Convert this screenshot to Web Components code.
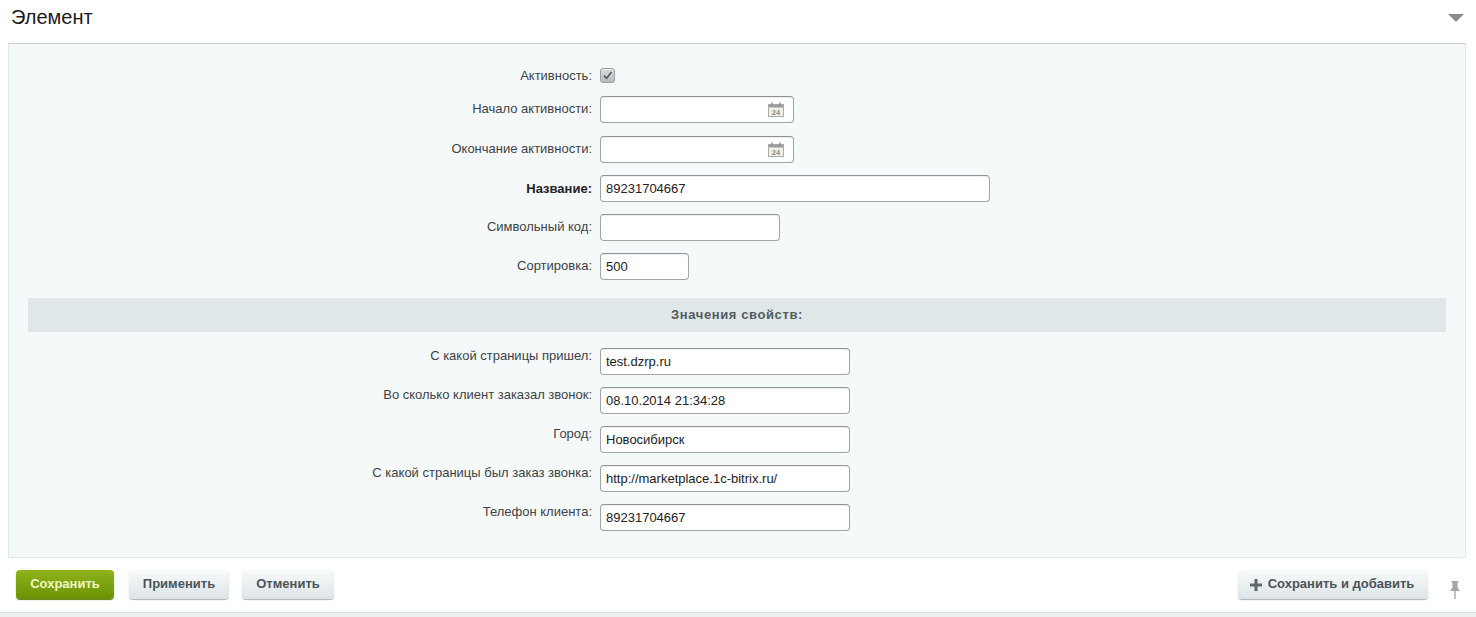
<!DOCTYPE html>
<html lang="ru"><head><meta charset="utf-8"><title>Элемент</title>
<style>
html,body{margin:0;padding:0;background:#fff;height:617px;overflow:hidden;font-family:"Liberation Sans",Arial,sans-serif;font-size:13px;color:#000}
</style></head><body>
<x-page>
  <x-head slot="head">Элемент</x-head>
  <x-panel slot="panel">
    <x-row label="Активность:" kind="check"><x-check></x-check></x-row>
    <x-row label="Начало активности:" style="margin-bottom:13px"><x-field w="194" cal></x-field></x-row>
    <x-row label="Окончание активности:"><x-field w="194" cal></x-field></x-row>
    <x-row label="Название:" strong><x-field w="390">89231704667</x-field></x-row>
    <x-row label="Символьный код:"><x-field w="180"></x-field></x-row>
    <x-row label="Сортировка:"><x-field w="89">500</x-field></x-row>
    <x-section>Значения свойств:</x-section>
    <x-row label="С какой страницы пришел:" top><x-field w="250">test.dzrp.ru</x-field></x-row>
    <x-row label="Во сколько клиент заказал звонок:" top><x-field w="250">08.10.2014 21:34:28</x-field></x-row>
    <x-row label="Город:" top><x-field w="250">Новосибирск</x-field></x-row>
    <x-row label="С какой страницы был заказ звонка:" top><x-field w="250">http://marketplace.1c-bitrix.ru/</x-field></x-row>
    <x-row label="Телефон клиента:" top><x-field w="250">89231704667</x-field></x-row>
  </x-panel>
  <x-footer slot="foot">
    <x-btn kind="green" w="98">Сохранить</x-btn>
    <x-btn w="100" style="margin-left:15px">Применить</x-btn>
    <x-btn w="92" style="margin-left:13px">Отменить</x-btn>
    <x-btn w="190" plus style="margin-left:auto">Сохранить и добавить</x-btn>
    <x-pin></x-pin>
  </x-footer>
</x-page>
<script>
function def(name, html, init){
  customElements.define(name, class extends HTMLElement{
    constructor(){super();const r=this.attachShadow({mode:'open'});r.innerHTML=html;}
    connectedCallback(){ if(init) init(this,this.shadowRoot); }
  });
}
def('x-page',`<style>:host{display:flex;flex-direction:column;height:617px;box-sizing:border-box}
.strip{margin-top:auto;height:4px;background:#eaf0f0;border-top:1px solid #d7e0e0}</style>
<slot name="head"></slot><slot name="panel"></slot><slot name="foot"></slot><slot></slot><div class="strip"></div>`);
def('x-head',`<style>:host{display:flex;align-items:flex-start;height:43px;padding:0 12px 0 11px;box-sizing:border-box;font-size:20px;line-height:23px;color:#1a1a1a;justify-content:space-between}
.t{padding-top:6px}
svg{margin-top:14px;display:block}</style><div class="t"><slot></slot></div>
<svg width="16" height="8" viewBox="0 0 16 8"><path d="M0 0H16L8 8Z" fill="#8c8c8c"/></svg>`);
def('x-panel',`<style>:host{display:flex;flex-direction:column;margin:0 10px 0 8px;height:515px;box-sizing:border-box;background:#f5f9f9;border:1px solid #e3e8e8;border-top:1px solid #c9cfcf;padding:24px 19px 0 19px}</style><slot></slot>`);
def('x-row',`<style>:host{display:grid;grid-template-columns:564px auto;column-gap:8px;align-items:center;height:27px;margin-bottom:12px;justify-content:start;color:#3d4347;font-size:13px}
:host([kind=check]){height:15px;margin-bottom:13px}
.l{text-align:right;white-space:nowrap;line-height:15px;margin-top:-3px}
:host([kind=check]) .l{margin-top:-1px}
:host([strong]) .l{font-weight:700;color:#222;margin-top:-1px}
:host([top]) .l{align-self:start;margin-top:0}</style><div class="l"></div><div><slot></slot></div>`,
(h,r)=>{r.querySelector('.l').textContent=h.getAttribute('label')});
def('x-check',`<style>:host{display:block;width:15px;height:15px;box-sizing:border-box;border:1px solid #9a9fa3;border-radius:3px;background:linear-gradient(#d7dadc,#b9bec1);box-shadow:inset 0 1px 0 #eef0f1}
svg{display:block}</style><svg width="13" height="13" viewBox="0 0 13 13"><path d="M3 6.500L5.500 9.500L10.500 3" fill="none" stroke="#4a5157" stroke-width="1.400"/></svg>`);
def('x-field',`<style>:host{display:flex;align-items:center;justify-content:space-between;height:27px;box-sizing:border-box;background:#fff;border:1px solid #a0a5a8;border-top-color:#8f9498;border-radius:4px;padding:0 9px 0 5px;color:#222;font-size:13px;white-space:nowrap;box-shadow:inset 0 1px 1px #eee}
svg{display:none}:host([cal]) svg{display:block}</style><span><slot></slot></span>
<svg width="16" height="15" viewBox="0 0 16 15"><rect x=".5" y="2.500" width="15" height="12" fill="#f1f1ec" stroke="#a9aca8"/><rect x="1" y="3" width="14" height="2.500" fill="#9a9d9b"/><path d="M4 0.500v3M12 0.500v3" stroke="#8a8d8b" stroke-width="1.400"/><text x="8" y="13" font-family="Liberation Sans,sans-serif" font-size="7.500" font-weight="700" text-anchor="middle" fill="#8a8d8b">24</text></svg>`,
(h)=>{h.style.width=h.getAttribute('w')+'px'});
def('x-section',`<style>:host{display:flex;align-items:center;justify-content:center;height:34px;box-sizing:border-box;padding-bottom:2px;background:#e0e7e9;margin:6px 0 16px;color:#525c5f;font-weight:700;font-size:13px;letter-spacing:.6px}</style><slot></slot>`);
def('x-footer',`<style>:host{display:flex;align-items:flex-start;padding:12px 0 0 16px;margin-right:12px}</style><slot></slot>`);
def('x-btn',`<style>:host{display:flex;align-items:center;justify-content:center;gap:6px;height:29px;box-sizing:border-box;border-radius:4px;background:linear-gradient(#f8fafa,#dde4e7);box-shadow:0 1px 1px #a9b1b4;color:#4b5459;font-weight:700;font-size:13px;white-space:nowrap;padding:0 0 3px}
:host([plus]){padding:0 2px 3px 0}
:host([kind=green]){background:linear-gradient(#8fb31a,#6c9205);box-shadow:0 1px 1px #5c7a0a;color:#eef6c4}
svg{display:none}:host([plus]) svg{display:block;margin-top:3px}</style>
<svg width="12" height="12" viewBox="0 0 12 12"><path d="M4.500 0h3v4.500h4.500v3h-4.500v4.500h-3v-4.500h-4.500v-3h4.500z" fill="#5d676b"/></svg><slot></slot>`,
(h)=>{h.style.width=h.getAttribute('w')+'px'});
def('x-pin',`<style>:host{display:block;margin:11px 4px 0 22px}svg{display:block}</style>
<svg width="10" height="18" viewBox="0 0 10 18"><path d="M1.500 0h7v1.500h-1v5l2 2.500v1h-9v-1l2-2.500v-5h-1z" fill="#a3a9a9"/><rect x="4.300" y="10" width="1.400" height="8" fill="#a3a9a9"/></svg>`);
</script>
</body></html>
